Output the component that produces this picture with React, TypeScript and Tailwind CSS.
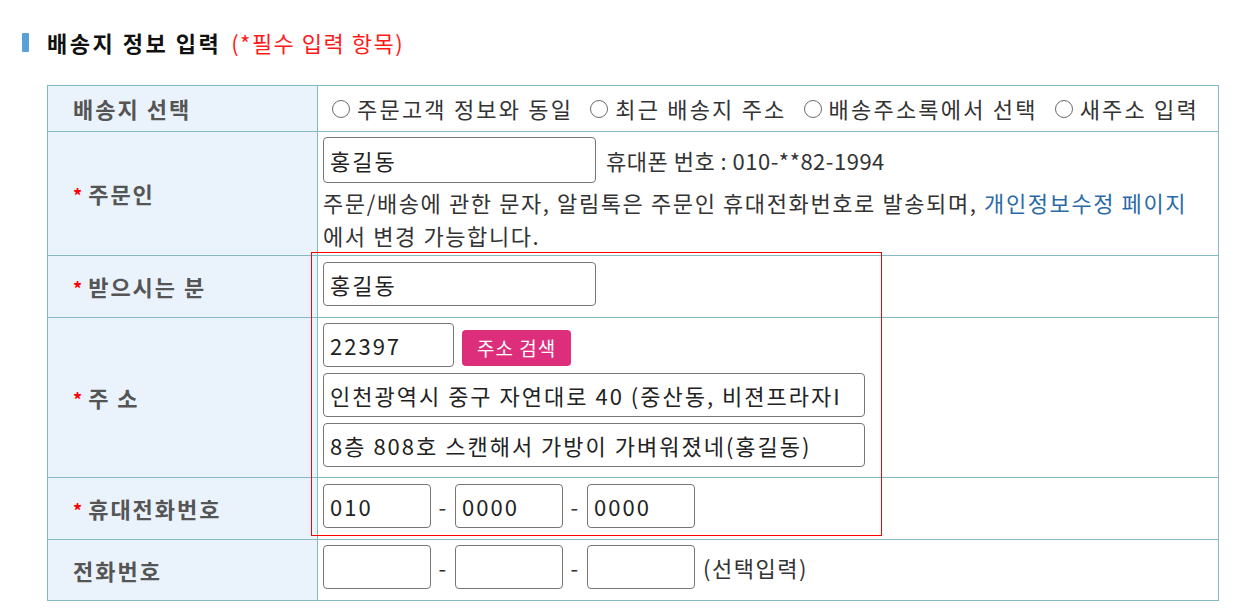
import React from 'react';

const font = { fontFamily: '"Noto Sans CJK KR", "Noto Sans", sans-serif' };

const Field: React.FC<{ value?: string; className?: string }> = ({ value = '', className = '' }) => (
  <input
    defaultValue={value}
    className={`h-[44px] rounded-[4px] border border-[#767676] bg-white px-[6px] text-[22px] tracking-[2px] text-[#222] outline-none ${className}`}
  />
);

const Radio: React.FC<{ label: string }> = ({ label }) => (
  <label className="flex items-center gap-[7px]">
    <span className="inline-block size-[18px] rounded-full border-[1.5px] border-[#6b6b6b] bg-white" />
    <span>{label}</span>
  </label>
);

const Label: React.FC<{ text: string; required?: boolean }> = ({ text, required }) => (
  <th className="w-[270px] border border-[#84b8c4] bg-[#eaf3fb] pl-[25px] text-left align-middle text-[22px] font-bold tracking-[2px] text-[#555]">
    {required && <span className="mr-[4px] text-[18px] text-[#ff0000]">*</span>}
    {text}
  </th>
);

const Phone: React.FC<{ values?: string[] }> = ({ values = ['', '', ''] }) => (
  <div className="flex items-center">
    <Field value={values[0]} className="w-[108px] tracking-[0.5px]" />
    <span className="w-[24px] text-center">-</span>
    <Field value={values[1]} className="w-[108px] tracking-[0.5px]" />
    <span className="w-[24px] text-center">-</span>
    <Field value={values[2]} className="w-[108px] tracking-[0.5px]" />
  </div>
);

export default function App() {
  return (
    <div className="min-h-screen bg-white pl-[22px] pt-[32px]" style={font}>
      <h2 className="flex items-center text-[22px] leading-[20px] tracking-[2.5px]">
        <span className="mr-[18px] inline-block h-[19px] w-[7px] rounded-[1px] bg-[#5aa0d8]" />
        <span className="mr-[10px] font-bold text-[#111]">배송지 정보 입력</span>
        <span className="tracking-[1.5px] text-[#ff1a1a]">(*필수 입력 항목)</span>
      </h2>

      <div className="relative ml-[25px] mt-[33px] w-[1172px]">
        <table className="w-full border-collapse border border-[#84b8c4] text-[22px] tracking-[1.5px] text-[#333]">
          <tbody>
            <tr className="h-[46px]">
              <Label text="배송지 선택" />
              <td className="border border-[#84b8c4] pl-[14px]">
                <div className="flex items-center gap-[17px] tracking-[2.2px]">
                  <Radio label="주문고객 정보와 동일" />
                  <Radio label="최근 배송지 주소" />
                  <Radio label="배송주소록에서 선택" />
                  <Radio label="새주소 입력" />
                </div>
              </td>
            </tr>
            <tr className="h-[124px]">
              <Label text="주문인" required />
              <td className="border border-[#84b8c4] px-[5px] pt-[5px] align-top">
                <div className="flex items-center gap-[10px]">
                  <Field value="홍길동" className="h-[46px] w-[273px]" />
                  <span className="tracking-[0.5px]">휴대폰 번호 : 010-**82-1994</span>
                </div>
                <p className="mt-[3px] break-keep leading-[33px] tracking-[1.6px]">
                  주문/배송에 관한 문자, 알림톡은 주문인 휴대전화번호로 발송되며,{' '}
                  <a className="text-[#2a6aa8]">개인정보수정 페이지</a>
                  <wbr />
                  에서 변경 가능합니다.
                </p>
              </td>
            </tr>
            <tr className="h-[62px]">
              <Label text="받으시는 분" required />
              <td className="border border-[#84b8c4] px-[5px] pt-[6px] align-top">
                <Field value="홍길동" className="h-[43px] w-[273px]" />
              </td>
            </tr>
            <tr className="h-[160px]">
              <Label text="주 소" required />
              <td className="border border-[#84b8c4] px-[5px] pt-[5px] align-top">
                <div className="flex flex-col gap-[6px]">
                  <div className="flex items-start gap-[8px]">
                    <Field value="22397" className="h-[43px] w-[131px] tracking-[0.5px]" />
                    <button className="mt-[7px] h-[36px] rounded-[4px] bg-[#dd2e7c] px-[15px] text-[19px] tracking-[1px] text-white">
                      주소 검색
                    </button>
                  </div>
                  <Field value="인천광역시 중구 자연대로 40 (중산동, 비젼프라자I" className="w-[542px]" />
                  <Field value="8층 808호 스캔해서 가방이 가벼워졌네(홍길동)" className="w-[542px]" />
                </div>
              </td>
            </tr>
            <tr className="h-[62px]">
              <Label text="휴대전화번호" required />
              <td className="border border-[#84b8c4] px-[5px] pt-[6px] align-top">
                <Phone values={['010', '0000', '0000']} />
              </td>
            </tr>
            <tr className="h-[61px]">
              <Label text="전화번호" />
              <td className="border border-[#84b8c4] px-[5px] pt-[5px] align-top">
                <div className="flex items-center gap-[8px]">
                  <Phone />
                  <span>(선택입력)</span>
                </div>
              </td>
            </tr>
          </tbody>
        </table>
        <div className="pointer-events-none absolute left-[264px] top-[167px] h-[284px] w-[571px] border border-[#ff0000]" />
      </div>
    </div>
  );
}
